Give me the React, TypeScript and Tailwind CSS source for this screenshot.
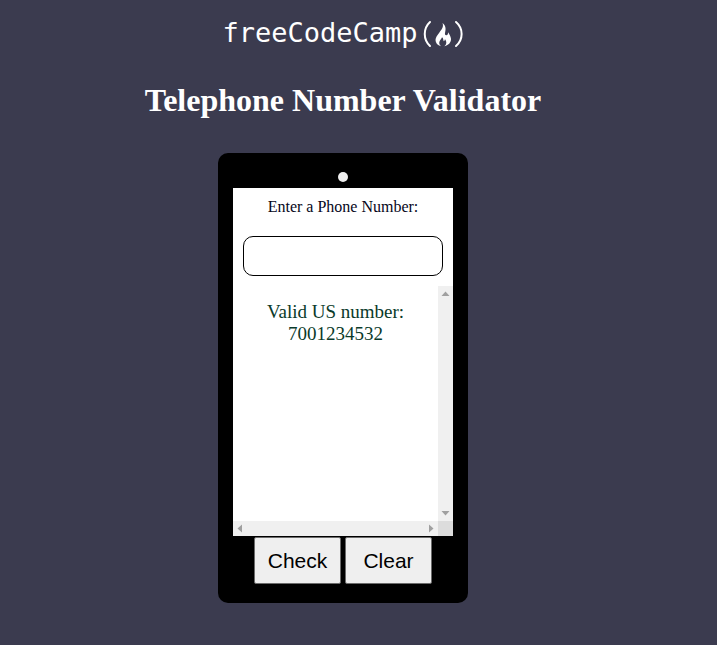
import { useState } from "react";

const US_NUMBER = /^(1\s?)?(\(\d{3}\)|\d{3})[\s-]?\d{3}[\s-]?\d{4}$/;

function Logo() {
  return (
    <div className="flex h-9 items-center justify-center text-white">
      <span className="font-['DejaVu_Sans_Mono',monospace] text-[27px] leading-9 font-light">freeCodeCamp</span>
      <svg viewBox="0 0 46 30" className="h-[30px] w-[46px]" aria-hidden="true">
        <path d="M12 4C5 10.500 5 21.500 12 28M38 4C45.500 10.500 45.500 21.500 38 28" fill="none" stroke="currentColor" strokeWidth="2" strokeLinecap="round" />
        <path
          d="M24.500 5C26 9 23.600 11.400 21.400 14.400C19.400 17.100 17.500 19.400 17.500 22C17.500 25 19.600 27.300 23 28.200C21.300 26.900 20.900 25.200 21.500 23.600C22 22 23.300 21 24 19.200C25.500 20.200 25.200 21.900 25.700 23.200C26.700 22.800 27 22 26.900 21C29 23.700 28.800 26.400 26.400 28.200C30.800 27.200 33.200 24.300 33 20.800C32.700 18 31.200 16.400 30.200 14.200C30 16 29.500 17.100 28.400 17.300C27 17.400 26.700 16.100 27.100 14.500C28.100 10.800 27.700 7.200 24.500 5Z"
          fill="currentColor"
        />
      </svg>
    </div>
  );
}

function Arrow({ points }: { points: string }) {
  return (
    <svg viewBox="0 0 15 15" className="size-[15px]" aria-hidden="true">
      <polygon points={points} fill="#a0a0a0" />
    </svg>
  );
}

export default function App() {
  const [value, setValue] = useState("");
  const [result, setResult] = useState({ label: "Valid US number:", number: "7001234532" });

  const check = () => {
    if (!value) return;
    setResult({ label: US_NUMBER.test(value) ? "Valid US number:" : "Invalid US number:", number: value });
  };

  const buttonClass =
    "h-[47px] w-[87px] rounded-[2px] border border-[#6b6b6b] bg-[#efefef] font-['Liberation_Sans',sans-serif] text-[21px] text-black";

  return (
    <main className="flex min-h-screen flex-col items-center bg-[#3b3b4f] pt-[15px] pr-[31px] pb-10 font-['Liberation_Serif',serif] text-[#0a0a23]">
      <Logo />
      <h1 className="mt-7 text-center text-[32px] leading-[42px] font-bold text-white">Telephone Number Validator</h1>

      {/* Phone */}
      <div className="mt-8 flex h-[450px] w-[250px] flex-col items-center rounded-[10px] bg-black px-[15px] pt-[19px]">
        <span className="size-[10px] shrink-0 rounded-full bg-[#efefef]" />
        <div className="mt-[6px] flex h-[348px] w-full shrink-0 flex-col bg-white">
          <div className="flex flex-col items-center gap-[18px] px-[10px] pt-2 pb-[10px]">
            <label htmlFor="user-input" className="text-base leading-[22px] text-[#06061a]">
              Enter a Phone Number:
            </label>
            <input
              id="user-input"
              value={value}
              onChange={(e) => setValue(e.target.value)}
              className="h-10 w-full rounded-[10px] border border-black bg-white px-2 text-center text-base"
            />
          </div>

          {/* Results and scroll bars */}
          <div className="grid flex-1 grid-cols-[1fr_15px] grid-rows-[1fr_15px]">
            <div className="overflow-hidden pt-[15px] text-center text-[19px] leading-[22px] text-[#0a3a2a]">
              <p>{result.label}</p>
              <p>{result.number}</p>
            </div>
            <div className="flex flex-col justify-between bg-[#f0f0f0]">
              <Arrow points="3.500,10 11.500,10 7.500,5.500" />
              <Arrow points="3.500,5 11.500,5 7.500,9.500" />
            </div>
            <div className="flex justify-between bg-[#f0f0f0]">
              <Arrow points="9,3.500 9,11.500 4.500,7.500" />
              <Arrow points="6,3.500 6,11.500 10.500,7.500" />
            </div>
            <div className="bg-[#dcdcdc]" />
          </div>
        </div>
        <div className="mt-px flex gap-1">
          <button type="button" onClick={check} className={buttonClass}>
            Check
          </button>
          <button type="button" onClick={() => setResult({ label: "", number: "" })} className={buttonClass}>
            Clear
          </button>
        </div>
      </div>
    </main>
  );
}
